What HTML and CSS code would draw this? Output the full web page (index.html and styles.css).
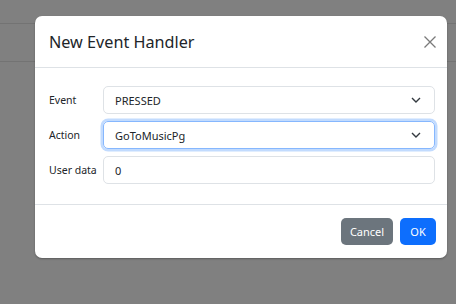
FILE: index.html
```html
<!DOCTYPE html>
<html lang="en">
<head>
  <meta charset="UTF-8">
  <meta name="viewport" content="width=device-width, initial-scale=1.0">
  <title>New Event Handler</title>
  <link rel="stylesheet" href="styles.css">
</head>
<body>
  <div class="page">
    <div class="page-row first"></div>
    <div class="page-row"></div>
  </div>

  <div class="modal">
    <div class="modal-header">
      <h5 class="modal-title">New Event Handler</h5>
      <button class="btn-close" aria-label="Close">
        <svg width="12" height="12" viewBox="0 0 12 12">
          <path d="M0.5 0.5 L11.5 11.5 M11.5 0.5 L0.5 11.5" stroke="#7a7a7a" stroke-width="1.3" fill="none" />
        </svg>
      </button>
    </div>

    <div class="modal-body">
      <div class="form-row">
        <label class="form-label">Event</label>
        <div class="form-select">
          <span>PRESSED</span>
          <svg class="chevron" width="10" height="6" viewBox="0 0 10 6">
            <path d="M1 1 L5 5 L9 1" stroke="#343a40" stroke-width="1.4" fill="none" />
          </svg>
        </div>
      </div>
      <div class="form-row">
        <label class="form-label">Action</label>
        <div class="form-select focused">
          <span>GoToMusicPg</span>
          <svg class="chevron" width="10" height="6" viewBox="0 0 10 6">
            <path d="M1 1 L5 5 L9 1" stroke="#343a40" stroke-width="1.4" fill="none" />
          </svg>
        </div>
      </div>
      <div class="form-row">
        <label class="form-label">User data</label>
        <div class="form-control">0</div>
      </div>
    </div>

    <div class="modal-footer">
      <button class="btn btn-secondary">Cancel</button>
      <button class="btn btn-primary">OK</button>
    </div>
  </div>
</body>
</html>
```

FILE: styles.css
```css
* {
  margin: 0;
  padding: 0;
  box-sizing: border-box;
}

body {
  font-family: "Noto Sans", "Liberation Sans", sans-serif;
  background-color: #808080;
  color: #212529;
  width: 456px;
  height: 304px;
  overflow: hidden;
  position: relative;
}

.page-row {
  height: 38px;
  border-bottom: 1px solid #737373;
}

.page-row.first {
  height: 24px;
}

.modal {
  position: absolute;
  left: 35px;
  top: 16px;
  width: 412px;
  background: #fff;
  border-radius: 7px;
  box-shadow: 0 1px 2px rgba(0, 0, 0, 0.3);
}

.modal-header {
  display: flex;
  align-items: center;
  justify-content: space-between;
  height: 52px;
  padding: 0 11px 0 14px;
  border-bottom: 1px solid #dee2e6;
}

.modal-title {
  font-size: 16.2px;
  font-weight: 400;
  line-height: 22px;
  margin-top: 1px;
}

.btn-close {
  border: none;
  background: none;
  width: 12px;
  height: 12px;
  display: flex;
  margin-top: 1px;
}

.modal-body {
  display: flex;
  flex-direction: column;
  gap: 7px;
  padding: 18px 12px 20px 14px;
}

.form-row {
  display: flex;
  align-items: center;
}

.form-label {
  width: 54px;
  font-size: 10.5px;
}

.form-select,
.form-control {
  flex: 1;
  height: 28px;
  display: flex;
  align-items: center;
  justify-content: space-between;
  padding: 0 13px 0 11px;
  border: 1px solid #dee2e6;
  border-radius: 5px;
  font-size: 11px;
}

.form-select.focused {
  border-color: #86b7fe;
  box-shadow: 0 0 0 2.5px rgba(13, 110, 253, 0.25);
}

.modal-footer {
  display: flex;
  justify-content: flex-end;
  gap: 7px;
  padding: 13px 11px 13px;
  border-top: 1px solid #dee2e6;
}

.btn {
  height: 27px;
  border: none;
  border-radius: 5px;
  color: #fff;
  font-family: inherit;
  font-size: 11px;
}

.btn-secondary {
  width: 52px;
  background-color: #6c757d;
}

.btn-primary {
  width: 36px;
  background-color: #0d6efd;
}
```
